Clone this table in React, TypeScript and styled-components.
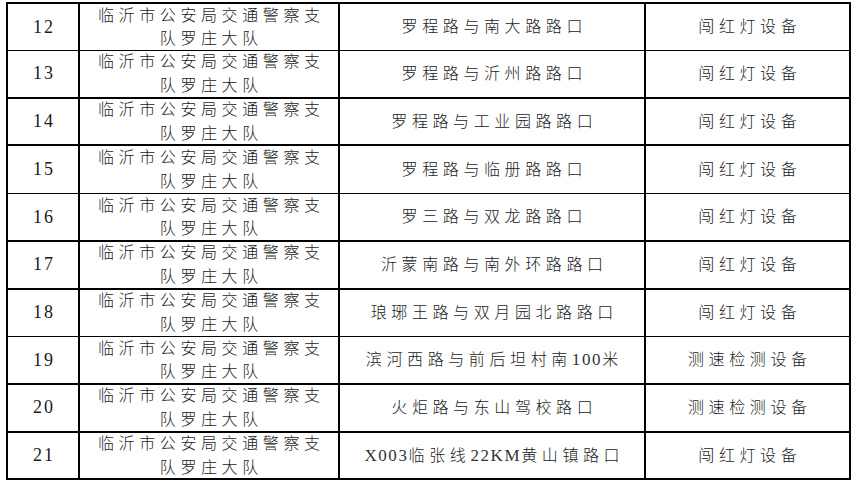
import React from "react";
import styled, { createGlobalStyle } from "styled-components";

const UNIT = "临沂市公安局交通警察支";
const UNIT_TAIL = "队罗庄大队";

const rows = [
  { no: 12, place: "罗程路与南大路路口", kind: "闯红灯设备" },
  { no: 13, place: "罗程路与沂州路路口", kind: "闯红灯设备" },
  { no: 14, place: "罗程路与工业园路路口", kind: "闯红灯设备" },
  { no: 15, place: "罗程路与临册路路口", kind: "闯红灯设备" },
  { no: 16, place: "罗三路与双龙路路口", kind: "闯红灯设备" },
  { no: 17, place: "沂蒙南路与南外环路路口", kind: "闯红灯设备" },
  { no: 18, place: "琅琊王路与双月园北路路口", kind: "闯红灯设备" },
  { no: 19, place: "滨河西路与前后坦村南100米", kind: "测速检测设备" },
  { no: 20, place: "火炬路与东山驾校路口", kind: "测速检测设备" },
  { no: 21, place: "X003临张线22KM黄山镇路口", kind: "闯红灯设备" },
];

// latin runs are set tighter than the CJK characters
function Mixed({ text }: { text: string }) {
  return (
    <>
      {text.split(/([A-Za-z0-9]+)/).map((part, i) =>
        /^[A-Za-z0-9]+$/.test(part) ? <Latin key={i}>{part}</Latin> : part
      )}
    </>
  );
}

export default function App() {
  return (
    <>
      <GlobalStyle />
      <Page>
        <Table>
          {rows.map((r) => (
            <Row key={r.no}>
              <NoCell>{r.no}</NoCell>
              <TextCell>
                <Text>
                  {UNIT}
                  <br />
                  {UNIT_TAIL}
                </Text>
              </TextCell>
              <TextCell>
                <Text>
                  <Mixed text={r.place} />
                </Text>
              </TextCell>
              <TextCell $last>
                <Text>{r.kind}</Text>
              </TextCell>
            </Row>
          ))}
        </Table>
      </Page>
    </>
  );
}

const GlobalStyle = createGlobalStyle`
  html, body {
    margin: 0;
    background: #fff;
  }
`;

const Page = styled.div`
  padding: 2px 0 0 6px;
  width: 856px;
  height: 486px;
  box-sizing: border-box;
  overflow: hidden;
`;

const Table = styled.div`
  width: 845px;
  border: 2px solid #000;
  border-bottom: none;
  box-sizing: border-box;
  display: flex;
  flex-direction: column;
`;

const Row = styled.div`
  display: grid;
  grid-template-columns: 72px 260px 306px 1fr;
  height: 47.72px;
  box-sizing: border-box;
  border-bottom: 2px solid #000;

  &:first-child {
    height: 47px;
  }

  &:nth-child(3n + 1) {
    border-bottom-width: 1px;
  }

  &:last-child {
    border-bottom-width: 2px;
  }
`;

const Cell = styled.div<{ $last?: boolean }>`
  display: flex;
  align-items: center;
  justify-content: center;
  border-right: ${(p) => (p.$last ? "none" : "2px solid #000")};
  color: #1a1a1a;
  overflow: hidden;
`;

const NoCell = styled(Cell)`
  font-family: "Liberation Serif", serif;
  font-size: 18px;
  letter-spacing: 2px;
  padding-left: 2px;
`;

const TextCell = styled(Cell)``;

const Text = styled.div`
  font-family: "Liberation Serif", "Noto Sans CJK SC", serif;
  font-size: 16px;
  font-weight: 300;
  line-height: 23.5px;
  letter-spacing: 4.6px;
  padding-left: 4.6px;
  text-align: center;
  white-space: nowrap;
`;

const Latin = styled.span`
  font-size: 17px;
  font-weight: 400;
  color: #333;
  letter-spacing: 1.6px;
`;
